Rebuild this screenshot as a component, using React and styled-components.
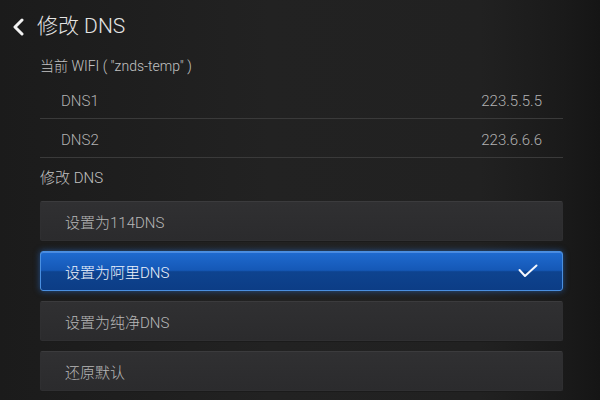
import styled, { createGlobalStyle, css } from 'styled-components';

const GlobalStyle = createGlobalStyle`
  html, body {
    margin: 0;
    padding: 0;
    background: #1a1a1a;
  }
  body {
    font-family: Roboto, "Noto Sans CJK SC", "Noto Sans", sans-serif;
  }
`;

const Screen = styled.div`
  width: 600px;
  height: 400px;
  overflow: hidden;
  background: linear-gradient(to right, #1b1b1b 0%, #222222 45%, #212121 80%, #1a1a1a 94%, #151515 100%);
`;

const Header = styled.div`
  height: 49px;
  display: flex;
  align-items: center;
  padding: 4px 0 0 12px;
  gap: 13px;
  box-sizing: border-box;
`;

const Title = styled.h1`
  margin: 0;
  font-size: 21px;
  font-weight: 300;
  color: #e4e4e4;
  line-height: 1;
`;

const Content = styled.div`
  padding: 0 37px 0 40px;
`;

const SectionLabel = styled.div`
  height: ${({ $h }) => $h}px;
  display: flex;
  align-items: center;
  font-size: ${({ $size }) => $size}px;
  font-weight: 300;
  color: #c2c2c2;
`;

const InfoRow = styled.div`
  height: 39px;
  box-sizing: border-box;
  display: flex;
  align-items: flex-end;
  justify-content: space-between;
  padding: 0 21px 7px 21px;
  border-bottom: 1px solid #3a3a3a;
  font-size: 15px;
  font-weight: 300;
  line-height: 20px;
  color: #b2b2b2;
`;

const OptionList = styled.div`
  display: flex;
  flex-direction: column;
  gap: 10px;
  margin-top: 6px;
`;

const Option = styled.div`
  height: 40px;
  box-sizing: border-box;
  display: flex;
  align-items: center;
  justify-content: space-between;
  padding: 0 24px 0 24px;
  border-radius: 2px;
  font-size: 15px;
  font-weight: 300;
  color: #b8b8b8;
  background: linear-gradient(to bottom, #303032 0%, #2b2b2d 100%);
  border: 1px solid #2f2f31;
  border-top-color: #3b3b3d;
  box-shadow: 0 1px 0 #1b1b1b;

  ${({ $active }) =>
    $active &&
    css`
      color: #eef3fc;
      background: linear-gradient(to bottom, #1f6bd0 0%, #1558b6 48%, #0e438f 52%, #0c3d86 100%);
      border: 1px solid #4a8fe0;
      border-radius: 3px;
      box-shadow: 0 0 6px rgba(40, 120, 230, 0.55), inset 0 1px 0 rgba(160, 200, 255, 0.35);
    `}
`;

const Chevron = () => (
  <svg width="12" height="18" viewBox="0 0 12 18">
    <polyline points="10,2 3,9 10,16" fill="none" stroke="#f2f2f2" strokeWidth="3" strokeLinecap="round" strokeLinejoin="round" />
  </svg>
);

const Check = () => (
  <svg width="20" height="14" viewBox="0 0 20 14">
    <polyline points="1.5,6 7,12 18.5,1.5" fill="none" stroke="#f4f7fd" strokeWidth="2" strokeLinecap="round" strokeLinejoin="round" />
  </svg>
);

const options = [
  { label: '设置为114DNS' },
  { label: '设置为阿里DNS', active: true },
  { label: '设置为纯净DNS' },
  { label: '还原默认' },
];

export default function App() {
  return (
    <>
      <GlobalStyle />
      <Screen>
        <Header>
          <Chevron />
          <Title>修改 DNS</Title>
        </Header>
        <Content>
          <SectionLabel $h={31} $size={14}>当前 WIFI ( "znds-temp" )</SectionLabel>
          <InfoRow>
            <span>DNS1</span>
            <span>223.5.5.5</span>
          </InfoRow>
          <InfoRow>
            <span>DNS2</span>
            <span>223.6.6.6</span>
          </InfoRow>
          <SectionLabel $h={37} $size={15}>修改 DNS</SectionLabel>
          <OptionList>
            {options.map((o) => (
              <Option key={o.label} $active={o.active}>
                <span>{o.label}</span>
                {o.active && <Check />}
              </Option>
            ))}
          </OptionList>
        </Content>
      </Screen>
    </>
  );
}
